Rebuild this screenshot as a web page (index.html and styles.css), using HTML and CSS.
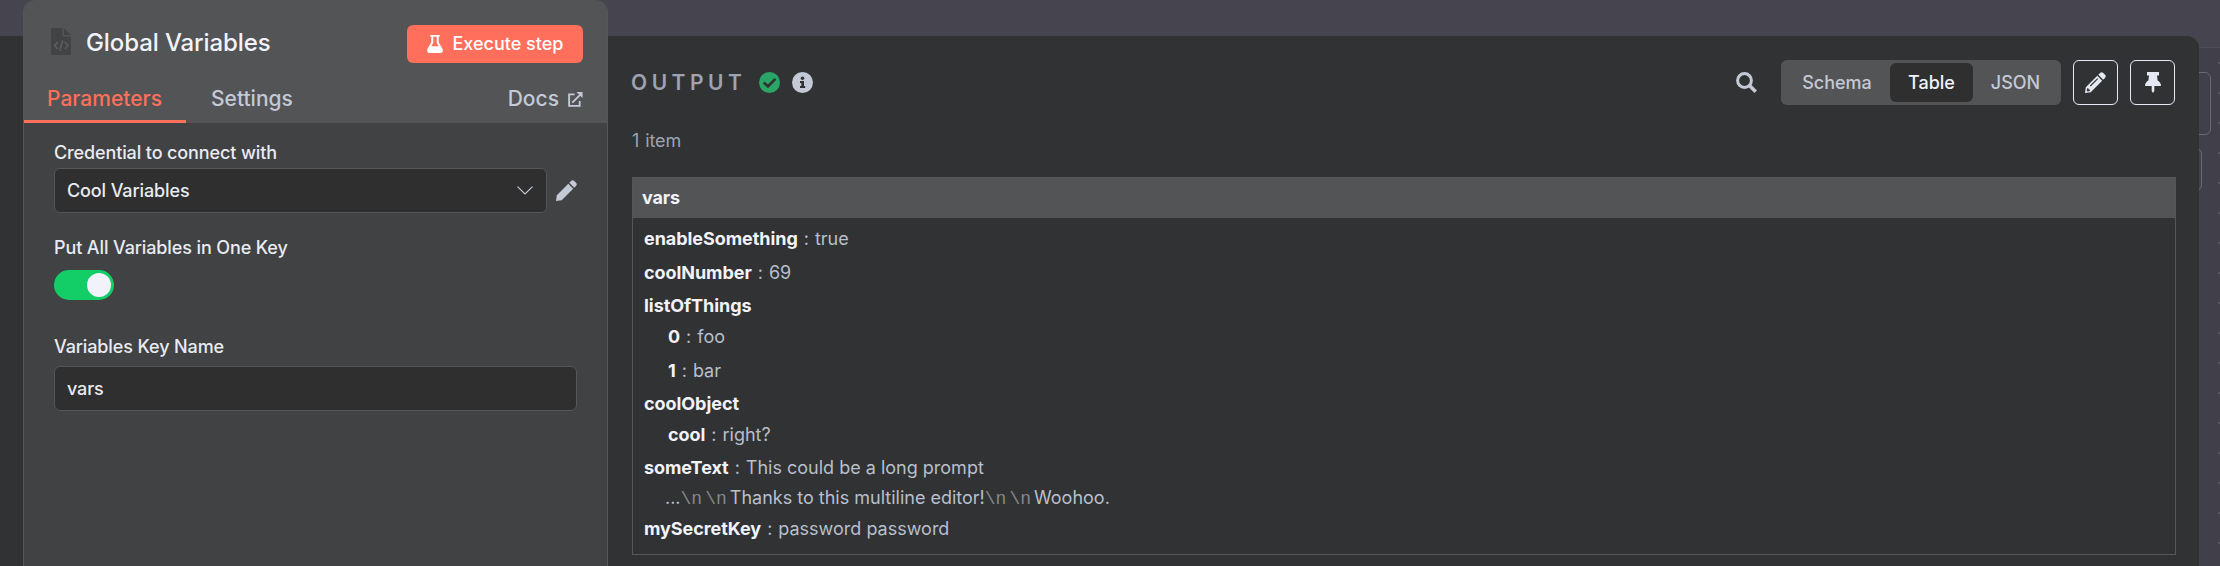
FILE: index.html
```html
<!DOCTYPE html>
<html lang="en">
<head>
<meta charset="utf-8">
<title>Global Variables</title>
<link rel="stylesheet" href="styles.css">
</head>
<body>
<div class="canvas">
  <div class="canvas-header"></div>
  <div class="canvas-node node-large"></div>
  <div class="canvas-node node-small"></div>
  <div class="canvas-grid"></div>
</div>
<main class="ndv">
  <div class="input-edge"></div>
  <section class="settings">
    <header class="settings-header">
      <div class="title-row">
        <svg class="file-icon" viewBox="0 0 20 27"><path fill="#424344" d="M1 0H11.5V8.5H20V25.500Q20 27 18.500 27H1.500Q0 27 0 25.500V1Q0 0 1 0ZM13 0.300 20 7H13Z"/><path fill="none" stroke="#5b5c5e" stroke-width="1.600" d="M6.800 14 3.700 17.500 6.800 21M13.800 14 17 17.500 13.800 21M11.600 12.200 8.800 22.800"/></svg>
        <h1 class="title">Global Variables</h1>
        <button class="execute">
          <svg class="flask" viewBox="0 0 16 18"><path fill="#fff" fill-rule="evenodd" d="M3.300 0H12.700V1.800H11.700V7.300L15.600 14Q16.600 18 13.600 18H2.400Q-.6 18 .4 14L4.300 7.300V1.800H3.300ZM6.300 1.800V7.800L4.300 11.300H11.700L9.700 7.800V1.800Z"/></svg>
          <span>Execute step</span>
        </button>
      </div>
      <nav class="tabs">
        <a class="tab tab-active"><span>Parameters</span></a>
        <a class="tab tab-settings">Settings</a>
        <a class="tab tab-docs">Docs
          <svg class="ext" viewBox="0 0 16 16"><path fill="none" stroke="#c3c9d5" stroke-width="2" d="M7 2.500H1.200V14.800H12.500V9.500M4.600 11.400 13.500 2.500"/><path fill="#c3c9d5" d="M9 0H15.500V6.500Z"/></svg>
        </a>
      </nav>
    </header>
    <div class="form">
      <label class="label">Credential to connect with</label>
      <div class="credential">
        <div class="field select"><span>Cool Variables</span>
          <svg class="chevron" viewBox="0 0 16 9"><path fill="none" stroke="#c3c9d5" stroke-width="1.200" d="M.5.600 8 8 15.500.600"/></svg>
        </div>
        <svg class="pencil" viewBox="0 0 21 21"><path fill="#c3c9d5" d="M12.300 3.800 17.200 8.700 5.700 20.200 0 21 .8 15.300ZM13.300 2.800 15.100 1Q16.700-.6 18.300 1L20 2.700Q21.600 4.300 20 5.900L18.200 7.700Z"/></svg>
      </div>
      <label class="label label-toggle">Put All Variables in One Key</label>
      <div class="toggle"><span class="knob"></span></div>
      <label class="label label-key">Variables Key Name</label>
      <div class="field key"><span>vars</span></div>
    </div>
  </section>
  <section class="output">
    <header class="output-header">
      <h2 class="output-title">OUTPUT</h2>
      <svg class="status check" viewBox="0 0 21 21"><circle cx="10.500" cy="10.500" r="10.500" fill="#29a568"/><path fill="none" stroke="#313233" stroke-width="2.700" stroke-linecap="round" d="M5.500 11.200 9 14.300 15.700 7.600"/></svg>
      <svg class="status" viewBox="0 0 21 21"><circle cx="10.500" cy="10.500" r="10.500" fill="#c3c9d5"/><circle cx="10.500" cy="6.200" r="1.800" fill="#313233"/><path fill="#313233" d="M8 9H12V14H13.200V16H8V14H9.300V11H8Z"/></svg>
      <div class="actions">
        <svg class="search" viewBox="0 0 21 21"><circle cx="8.500" cy="8.500" r="6.900" fill="none" stroke="#c3c9d5" stroke-width="3"/><path stroke="#c3c9d5" stroke-width="3.600" d="M13.500 13.500 19.700 19.700"/></svg>
        <div class="segmented">
          <span class="seg seg-schema">Schema</span><span class="seg seg-active">Table</span><span class="seg seg-json">JSON</span>
        </div>
        <button class="icon-button"><svg width="21" height="21" viewBox="0 0 21 21"><path fill="#e6e9f2" fill-rule="evenodd" d="M12.300 3.800 17.200 8.700 5.700 20.200 0 21 .8 15.300ZM12.300 6.200 4.800 13.600 5.600 14.400 13.100 7ZM2.200 16.300 1.700 18.500 2.600 19.400 4.800 18.900 4.700 17.400 3.500 17.300 3.400 16.300ZM13.300 2.800 15.100 1Q16.700-.6 18.300 1L20 2.700Q21.600 4.300 20 5.900L18.200 7.700Z"/></svg></button>
        <button class="icon-button"><svg width="16" height="21" viewBox="0 0 16 21"><path fill="#e6e9f2" d="M2 0H14V3.500H12L12.600 8.500Q16 10.500 16 14H9.300V19L8 21 6.700 19V14H0Q0 10.500 3.400 8.500L4 3.500H2Z"/></svg></button>
      </div>
    </header>
    <p class="count">1 item</p>
    <div class="table">
      <div class="table-head">vars</div>
      <div class="table-body">
        <div class="row"><b>enableSomething</b><i>:</i><span>true</span></div>
        <div class="row row-33"><b>coolNumber</b><i>:</i><span>69</span></div>
        <div class="row row-31"><b>listOfThings</b></div>
        <div class="row nested"><b>0</b><i>:</i><span>foo</span></div>
        <div class="row row-33 nested"><b>1</b><i>:</i><span>bar</span></div>
        <div class="row row-31"><b>coolObject</b></div>
        <div class="row row-33 nested"><b>cool</b><i>:</i><span>right?</span></div>
        <div class="row row-30"><b>someText</b><i>:</i><span>This could be a long prompt</span></div>
        <div class="row row-31 continued"><span>...<em>\n</em><em class="nl">\n</em>Thanks to this multiline editor!<em>\n</em><em class="nl">\n</em>Woohoo.</span></div>
        <div class="row"><b>mySecretKey</b><i>:</i><span>password password</span></div>
      </div>
    </div>
  </section>
</main>
</body>
</html>
```

FILE: styles.css
```css
* { box-sizing: border-box; }
body {
  margin: 0;
  width: 2220px;
  height: 566px;
  overflow: hidden;
  position: relative;
  background: #403f4a;
  color: #e9ebf2;
  font: 18px/24px Inter, sans-serif;
}
svg { display: block; flex: none; }
h1, h2, p { margin: 0; }
button { font: inherit; padding: 0; }

.canvas { position: absolute; inset: 0; overflow: hidden; }
.canvas-header { height: 48px; background: #46454f; border-bottom: 1px solid #4c4b56; }
.canvas-node { position: absolute; border: 1px solid #696873; border-radius: 6px; }
.node-large { left: 2150px; top: 72px; width: 61px; height: 63px; }
.node-small { left: 2150px; top: 148px; width: 52px; height: 43px; }
.canvas-grid {
  position: absolute; left: 2218px; top: 62px; right: 0; bottom: 0;
  background: repeating-linear-gradient(#57565f 0 2px, transparent 2px 30px);
}

.ndv { position: relative; display: flex; width: 2199px; height: 566px; }
.input-edge { width: 23px; margin-top: 36px; background: #313233; }
.settings {
  width: 585px;
  background: #414244;
  border: 1px solid #555658;
  border-top: 0;
  border-bottom: 0;
  border-radius: 12px 12px 0 0;
  overflow: hidden;
}
.settings-header { height: 123px; background: #535456; }
.title-row { display: flex; align-items: flex-start; height: 82px; padding: 25px 24px 0 27px; }
.file-icon { width: 20px; height: 27px; margin-top: 3px; }
.title {
  margin: 3px 0 0 15px;
  font-size: 24px; line-height: 30px; font-weight: 500; letter-spacing: -0.1px;
  color: #f2f2fa;
}
.execute {
  display: flex; align-items: center; justify-content: center; gap: 10px;
  width: 176px; height: 38px; margin-left: auto;
  border: 0; border-radius: 6px; background: #ff6f5c; color: #fff; font-weight: 500;
}
.flask { width: 16px; height: 18px; }
.tabs { display: flex; height: 41px; font-size: 21px; line-height: 33px; font-weight: 500; color: #c3c9d5; }
.tab-active { width: 162px; padding-left: 23px; color: #ff6f5c; border-bottom: 3px solid #ff6f5c; }
.tab-settings { margin-left: 25px; }
.tab-docs { display: flex; gap: 9px; margin-left: auto; margin-right: 24px; }
.ext { width: 15px; height: 15px; margin-top: 10px; }

.form { display: flex; flex-direction: column; padding: 18px 30px 0; }
.label { height: 27px; font-weight: 500; letter-spacing: -0.12px; }
.credential { display: flex; align-items: center; gap: 9px; }
.field {
  display: flex; align-items: center; justify-content: space-between;
  height: 45px; padding: 0 13px 0 12px;
  border: 1px solid #555658; border-radius: 6px; background: #2e2f2e;
  font-weight: 500; letter-spacing: -0.12px;
}
.select { width: 493px; }
.chevron { width: 16px; height: 9px; }
.pencil { width: 21px; height: 21px; }
.label-toggle { margin-top: 23px; height: 34px; }
.toggle { display: flex; justify-content: flex-end; width: 60px; height: 30px; padding: 3px; border-radius: 15px; background: #13ce66; }
.knob { width: 24px; height: 24px; border-radius: 50%; background: #f2f2fa; }
.label-key { margin-top: 35px; height: 31px; }
.key { width: 523px; }

.output { width: 1591px; margin-top: 36px; padding: 24px 23px 0 24px; background: #313233; border-radius: 0 12px 0 0; }
.output-header { display: flex; align-items: center; height: 45px; }
.output-title { width: 115px; margin-left: -1px; font-size: 21px; font-weight: 600; letter-spacing: 4.5px; line-height: 24px; color: #9da3b0; }
.status { width: 21px; height: 21px; margin-left: 12px; }
.check { margin-left: 13px; }
.actions { display: flex; align-items: center; margin-left: auto; margin-right: 1px; gap: 12px; }
.search { width: 21px; height: 21px; margin-right: 12px; }
.segmented { display: flex; width: 280px; height: 45px; padding: 3px; border-radius: 6px; background: #535456; font-weight: 500; color: #c3c9d5; line-height: 39px; text-align: center; }
.seg-schema { width: 106px; }
.seg-active { width: 83px; border-radius: 6px; background: #2e2f2e; color: #f2f2fa; }
.seg-json { flex: 1; }
.icon-button { display: flex; align-items: center; justify-content: center; width: 45px; height: 45px; border: 1px solid #e6e9f2; border-radius: 6px; background: none; }
.count { margin-top: 24px; height: 48px; word-spacing: 1px; letter-spacing: -0.1px; color: #9da3b0; }
.table { height: 378px; border: 1px solid #555658; }
.table-head { height: 40px; padding-left: 9px; line-height: 40px; font-weight: 700; letter-spacing: -0.1px; background: #535456; color: #f2f2fa; }
.table-body { padding: 9px 11px 0; color: #b9bfcc; }
.row { display: flex; height: 34px; }
.row b { font-weight: 700; letter-spacing: -0.06px; color: #f2f2fa; }
.row i { font-style: normal; margin: 0 6px; }
.row em { font-style: normal; font-family: "Liberation Mono", monospace; color: #85868a; }
.row .nl { margin: 0 3px; }
.row-33 { height: 33px; }
.row-31 { height: 31px; }
.row-30 { height: 30px; }
.nested { padding-left: 24px; }
.continued { padding-left: 21px; }
```
